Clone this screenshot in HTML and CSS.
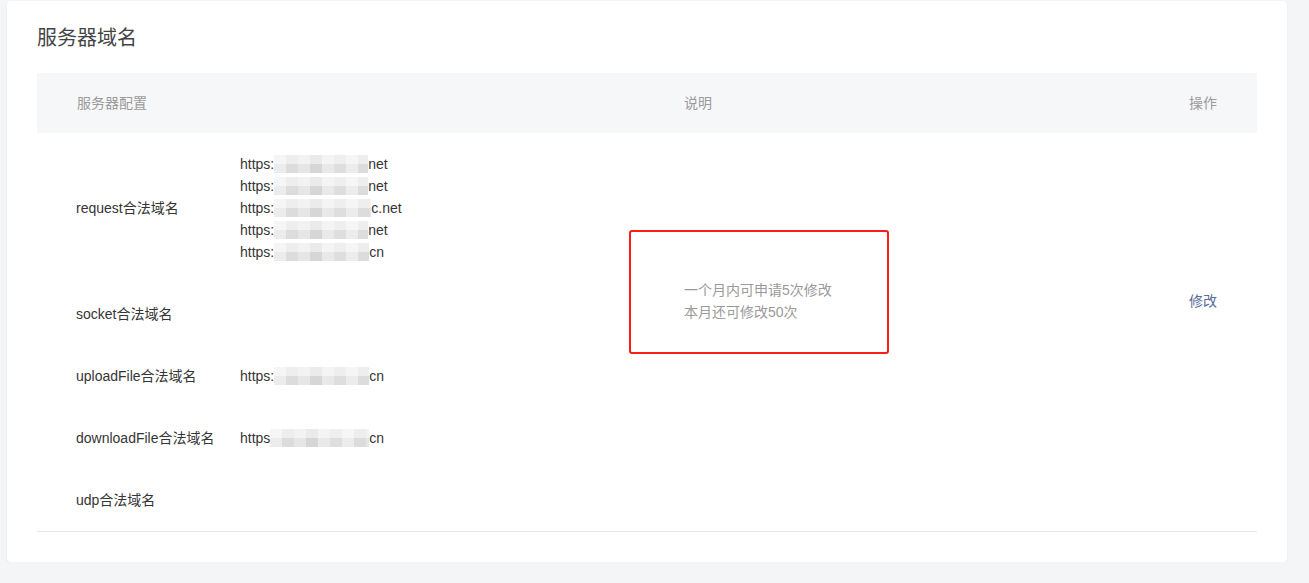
FILE: index.html
```html
<!DOCTYPE html>
<html lang="zh-CN">
<head>
    <meta charset="UTF-8">
    <title>服务器域名</title>
    <link rel="stylesheet" href="styles.css">
</head>
<body>

    <div class="card">
        <h2 class="card-title">服务器域名</h2>

        <div class="domain-table">
            <div class="table-head">
                <div class="col-config">服务器配置</div>
                <div class="col-desc">说明</div>
                <div class="col-action">操作</div>
            </div>

            <div class="table-body">
                <div class="col-config">
                    <div class="item">
                        <div class="item-label">request合法域名</div>
                        <div class="item-values">
                            <div>https:<span class="mask w94"></span>net</div>
                            <div>https:<span class="mask w94"></span>net</div>
                            <div>https:<span class="mask w97"></span>c.net</div>
                            <div>https:<span class="mask w94"></span>net</div>
                            <div>https:<span class="mask w95"></span>cn</div>
                        </div>
                    </div>
                    <div class="item">
                        <div class="item-label">socket合法域名</div>
                        <div class="item-values"></div>
                    </div>
                    <div class="item">
                        <div class="item-label">uploadFile合法域名</div>
                        <div class="item-values">
                            <div>https:<span class="mask w95"></span>cn</div>
                        </div>
                    </div>
                    <div class="item">
                        <div class="item-label">downloadFile合法域名</div>
                        <div class="item-values">
                            <div>https<span class="mask w99"></span>cn</div>
                        </div>
                    </div>
                    <div class="item">
                        <div class="item-label">udp合法域名</div>
                        <div class="item-values"></div>
                    </div>
                </div>

                <div class="col-desc">
                    <div class="desc-text">
                        <p>一个月内可申请5次修改</p>
                        <p>本月还可修改50次</p>
                    </div>
                    <div class="highlight-box"></div>
                </div>

                <div class="col-action">
                    <a href="#" class="action-link">修改</a>
                </div>
            </div>
        </div>
    </div>

</body>
</html>
```

FILE: styles.css
```css
body {
    margin: 0;
    padding: 1px 0 0 7px;
    background-color: #f4f5f7;
    font-family: "Liberation Sans", "Noto Sans CJK SC", sans-serif;
    font-size: 14px;
    color: #353535;
}

.card {
    width: 1280px;
    box-sizing: border-box;
    background-color: #ffffff;
    border-radius: 4px;
    box-shadow: 0 1px 2px rgba(0, 0, 0, 0.08);
    padding: 23px 30px 30px;
}

.card-title {
    margin: 0 0 21px;
    font-size: 20px;
    font-weight: normal;
    line-height: 28px;
    color: #444444;
}

.domain-table {
    border-bottom: 1px solid #e7e7eb;
}

.table-head,
.table-body {
    display: grid;
    grid-template-columns: 607px 1fr 140px;
}

.table-head {
    height: 60px;
    line-height: 60px;
    background-color: #f6f7f9;
    color: #9a9a9a;
}

.table-head .col-config {
    padding-left: 40px;
}

.col-action {
    padding-right: 40px;
    text-align: right;
}

.item {
    display: flex;
    align-items: center;
    padding: 20px 0;
    line-height: 22px;
}

.item-label {
    width: 203px;
    padding-left: 39px;
    box-sizing: border-box;
    flex-shrink: 0;
}

.item-values {
    min-height: 22px;
    white-space: nowrap;
}

.mask {
    display: inline-block;
    height: 18px;
    vertical-align: -4px;
    background:
        linear-gradient(180deg, rgba(255, 255, 255, 0.5) 0 50%, rgba(255, 255, 255, 0) 50% 100%),
        repeating-linear-gradient(90deg, #ececec 0 12px, #dcdcdc 12px 24px, #e6e6e6 24px 36px, #d6d6d6 36px 48px, #e9e9e9 48px 60px, #dedede 60px 72px);
}

.w94 { width: 94px; }
.w95 { width: 95px; }
.w97 { width: 97px; }
.w99 { width: 99px; }

.table-body .col-desc,
.table-body .col-action {
    display: flex;
    align-items: center;
    padding-bottom: 62px;
}

.table-body .col-action {
    justify-content: flex-end;
}

.col-desc {
    position: relative;
}

.table-head .col-desc,
.desc-text {
    padding-left: 40px;
}

.desc-text {
    color: #9a9a9a;
    line-height: 22px;
}

.desc-text p {
    margin: 0;
}

.highlight-box {
    position: absolute;
    left: -15px;
    top: 97px;
    width: 260px;
    height: 124px;
    box-sizing: border-box;
    border: 2px solid #fb1d15;
    border-radius: 3px;
}

.action-link {
    color: #576b95;
    text-decoration: none;
    line-height: 22px;
}
```
